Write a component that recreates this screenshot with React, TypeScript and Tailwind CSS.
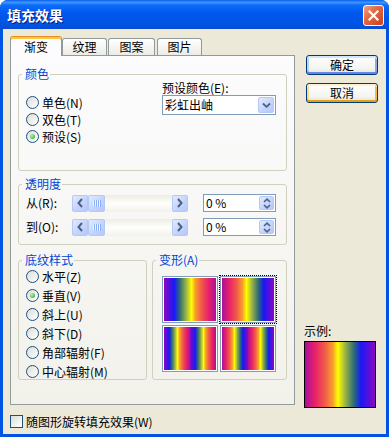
import React from 'react';

// rainbow preset ("彩虹出岫"), four variants of the vertical style
const GRAD_A =
  'bg-[linear-gradient(to_right,#8C08C0_0%,#1818F8_20%,#2C6C74_30%,#98B048_42%,#FFFF00_53%,#F8A02C_60%,#F05A48_72%,#E8206A_86%,#A8109C_100%)]';
const GRAD_B =
  'bg-[linear-gradient(to_right,#A8109C_0%,#E8206A_14%,#F05A48_28%,#F8A02C_40%,#FFFF00_47%,#98B048_58%,#2C6C74_70%,#1818F8_80%,#8C08C0_100%)]';
const GRAD_C =
  'bg-[linear-gradient(to_right,#8C08C0_0%,#1818F8_10%,#2C6C74_15%,#98B048_21%,#FFFF00_26%,#F8A02C_30%,#F05A48_36%,#E8206A_43%,#A8109C_50%,#8C08C0_50%,#1818F8_60%,#2C6C74_65%,#98B048_71%,#FFFF00_76%,#F8A02C_80%,#F05A48_86%,#E8206A_93%,#A8109C_100%)]';
const GRAD_D =
  'bg-[linear-gradient(to_right,#A8109C_0%,#E8206A_7%,#F05A48_14%,#F8A02C_20%,#FFFF00_24%,#98B048_29%,#2C6C74_35%,#1818F8_40%,#8C08C0_50%,#A8109C_50%,#E8206A_57%,#F05A48_64%,#F8A02C_70%,#FFFF00_74%,#98B048_79%,#2C6C74_85%,#1818F8_90%,#8C08C0_100%)]';

function BlueBtn({ className, children }: { className?: string; children?: React.ReactNode }) {
  return (
    <div
      className={`flex items-center justify-center rounded-[2px] border border-[#B5C9F6] bg-[linear-gradient(135deg,#E3EBFE,#C4D4FC_55%,#B4C8F6)] ${className ?? ''}`}
    >
      {children}
    </div>
  );
}

function Radio({ checked = false }: { checked?: boolean }) {
  return (
    <span className="flex h-[13px] w-[13px] shrink-0 items-center justify-center rounded-full border border-[#1C5180] bg-[linear-gradient(135deg,#DCDCD7,#FFFFFF)]">
      {checked && (
        <span className="h-[5px] w-[5px] rounded-full bg-[radial-gradient(circle_at_35%_35%,#B6F3B4,#21A121)]" />
      )}
    </span>
  );
}

function RadioRow({ label, checked }: { label: string; checked?: boolean }) {
  return (
    <div className="flex h-[13px] items-center gap-[3px] leading-[13px]">
      <Radio checked={checked} />
      <span>{label}</span>
    </div>
  );
}

function Group({ title, className, children }: { title: string; className?: string; children: React.ReactNode }) {
  return (
    <fieldset className={`rounded-[3px] border border-[#D0D0BF] ${className ?? ''}`}>
      <legend className="ml-[3px] pl-[3px] pr-[1px] leading-[14px] text-[#0046D5]">{title}</legend>
      {children}
    </fieldset>
  );
}

function HScroll() {
  return (
    <div className="flex h-[17px] w-[116px] bg-[linear-gradient(to_bottom,#EEEDE5,#FEFEFB_50%,#F3F1EC)]">
      <BlueBtn className="h-full w-[16px]">
        <svg width="6" height="10" viewBox="0 0 6 10">
          <polyline points="5,1 1.5,5 5,9" fill="none" stroke="#4D6185" strokeWidth="2" />
        </svg>
      </BlueBtn>
      <BlueBtn className="h-full w-[17px] gap-0">
        {[0, 1, 2, 3].map((i) => (
          <React.Fragment key={i}>
            <span className="h-[7px] w-[1px] bg-[#EEF4FE]" />
            <span className="h-[7px] w-[1px] bg-[#8CB0F8]" />
          </React.Fragment>
        ))}
      </BlueBtn>
      <div className="flex-1" />
      <BlueBtn className="h-full w-[16px]">
        <svg width="6" height="10" viewBox="0 0 6 10">
          <polyline points="1,1 4.5,5 1,9" fill="none" stroke="#4D6185" strokeWidth="2" />
        </svg>
      </BlueBtn>
    </div>
  );
}

function Spin() {
  return (
    <div className="ml-[15px] flex h-[18px] w-[73px] items-center border border-[#7F9DB9] bg-white pl-[2px] pr-[1px]">
      <span className="flex-1 leading-none">0 %</span>
      <BlueBtn className="h-[14px] w-[15px] flex-col gap-[1px]">
        <svg width="8" height="5" viewBox="0 0 8 5">
          <polyline points="1,4 4,1.2 7,4" fill="none" stroke="#4D6185" strokeWidth="1.6" />
        </svg>
        <svg width="8" height="5" viewBox="0 0 8 5">
          <polyline points="1,1 4,3.8 7,1" fill="none" stroke="#4D6185" strokeWidth="1.6" />
        </svg>
      </BlueBtn>
    </div>
  );
}

function TRow({ label }: { label: string }) {
  return (
    <div className="flex h-[18px] items-center">
      <span className="w-[46px] leading-none">{label}</span>
      <HScroll />
      <Spin />
    </div>
  );
}

function Thumb({ grad, selected }: { grad: string; selected?: boolean }) {
  return (
    <div
      className={`border border-[#7F9DB9] bg-white p-[1px] ${selected ? 'outline-1 outline-dotted outline-black' : ''}`}
    >
      <div className={`h-full w-full ${grad}`} />
    </div>
  );
}

export default function App() {
  return (
    <div className="flex h-[437px] w-[389px] flex-col overflow-hidden rounded-t-[8px] bg-[#0054E3] font-['Noto_Sans_CJK_SC',sans-serif] text-[12px] text-black">
      {/* Title bar */}
      <div className="flex h-[29px] shrink-0 items-center justify-between bg-[linear-gradient(to_bottom,#0A5FEF_0%,#3D95FF_8%,#0D6CFA_18%,#0058EE_45%,#0054E3_80%,#0051DC_92%,#0A4ACF_100%)] pl-[7px] pr-[5px]">
        <span className="text-[14px] font-bold leading-none text-white [text-shadow:1px_1px_0_#0A1883]">填充效果</span>
        <div className="mt-[2px] flex h-[21px] w-[21px] items-center justify-center rounded-[3px] border border-white bg-[linear-gradient(135deg,#F0A088,#E26A45_40%,#C9401A)]">
          <svg width="11" height="11" viewBox="0 0 11 11">
            <path d="M1.5 1.5 L9.5 9.5 M9.5 1.5 L1.5 9.5" stroke="white" strokeWidth="2.2" strokeLinecap="square" />
          </svg>
        </div>
      </div>

      {/* Body */}
      <div className="mx-[3px] mb-[3px] flex flex-1 bg-[#ECE9D8] pl-[7px] pt-[7px]">
        <div className="flex w-[285px] flex-col">
          {/* Tabs */}
          <div className="flex h-[19px] items-end">
            <div className="relative z-10 mb-[-1px] flex h-[20px] w-[52px] items-center justify-center rounded-t-[3px] border-x border-t border-x-[#919B9C] border-t-[#E68B2C] bg-[#FCFCFE] leading-none shadow-[inset_0_2px_0_#FFC83C]">
              渐变
            </div>
            <div className="flex h-[17px] w-[45px] items-center justify-center rounded-t-[3px] border-x border-t border-[#919B9C] bg-[linear-gradient(to_bottom,#FFFFFF,#ECEBE6)] leading-none">
              纹理
            </div>
            <div className="ml-[1px] flex h-[17px] w-[47px] items-center justify-center rounded-t-[3px] border-x border-t border-[#919B9C] bg-[linear-gradient(to_bottom,#FFFFFF,#ECEBE6)] leading-none">
              图案
            </div>
            <div className="ml-[2px] flex h-[17px] w-[45px] items-center justify-center rounded-t-[3px] border-x border-t border-[#919B9C] bg-[linear-gradient(to_bottom,#FFFFFF,#ECEBE6)] leading-none">
              图片
            </div>
          </div>

          {/* Tab page */}
          <div className="h-[350px] border border-[#919B9C] bg-[linear-gradient(to_bottom,#FCFCFE,#F2F1EA)] px-[7px] pt-[11px]">
            <Group title="颜色">
              <div className="flex pb-[27px]">
                <div className="flex flex-col gap-[4px] pl-[7px] pt-[15px]">
                  <RadioRow label="单色(N)" />
                  <RadioRow label="双色(T)" />
                  <RadioRow label="预设(S)" checked />
                </div>
                <div className="ml-auto mr-[10px] flex w-[114px] flex-col">
                  <span className="h-[14px] leading-[14px]">预设颜色(E):</span>
                  <div className="flex h-[20px] items-center border border-[#7F9DB9] bg-white pl-[2px] pr-[1px]">
                    <span className="flex-1 leading-none">彩虹出岫</span>
                    <BlueBtn className="h-[16px] w-[16px]">
                      <svg width="9" height="6" viewBox="0 0 9 6">
                        <polyline points="1,1.5 4.5,4.8 8,1.5" fill="none" stroke="#4D6185" strokeWidth="1.8" />
                      </svg>
                    </BlueBtn>
                  </div>
                </div>
              </div>
            </Group>

            <Group title="透明度" className="mt-[6px]">
              <div className="flex flex-col gap-[6px] pb-[8px] pl-[7px] pt-[3px]">
                <TRow label="从(R):" />
                <TRow label="到(O):" />
              </div>
            </Group>

            <div className="mt-[8px] flex gap-[5px]">
              <Group title="底纹样式" className="w-[129px]">
                <div className="flex flex-col gap-[6px] pb-[1px] pl-[7px] pt-[3px]">
                  <RadioRow label="水平(Z)" />
                  <RadioRow label="垂直(V)" checked />
                  <RadioRow label="斜上(U)" />
                  <RadioRow label="斜下(D)" />
                  <RadioRow label="角部辐射(F)" />
                  <RadioRow label="中心辐射(M)" />
                </div>
              </Group>
              <Group title="变形(A)" className="flex-1">
                <div className="grid grid-cols-[56px_56px] grid-rows-[47px_47px] gap-[2px] pl-[9px] pt-[9px]">
                  <Thumb grad={GRAD_A} />
                  <Thumb grad={GRAD_B} selected />
                  <Thumb grad={GRAD_C} />
                  <Thumb grad={GRAD_D} />
                </div>
              </Group>
            </div>
          </div>

          {/* Rotate with shape */}
          <div className="mt-[10px] flex h-[13px] items-center gap-[3px] leading-[13px]">
            <span className="h-[13px] w-[13px] border border-[#1C5180] bg-[linear-gradient(135deg,#DCDCD7,#FFFFFF)]" />
            <span>随图形旋转填充效果(W)</span>
          </div>
        </div>

        {/* Right column */}
        <div className="ml-[9px] flex flex-col pt-[19px]">
          <button className="ml-[2px] flex h-[20px] w-[72px] items-center justify-center rounded-[3px] border border-[#003C74] bg-[linear-gradient(to_bottom,#FFFFFF,#F4F4F0_70%,#E3E0D5)] leading-none shadow-[inset_0_2px_0_#CEE7FF,inset_0_-2px_0_#6982EE,inset_2px_0_0_#BCD4F6,inset_-2px_0_0_#89ADE4]">
            确定
          </button>
          <button className="ml-[2px] mt-[8px] flex h-[20px] w-[72px] items-center justify-center rounded-[3px] border border-[#003C74] bg-[linear-gradient(to_bottom,#FFFFFF,#F4F4F0_70%,#E3E0D5)] leading-none shadow-[inset_0_2px_0_#FFF0CF,inset_0_-2px_0_#E5A01A,inset_2px_0_0_#FBD891,inset_-2px_0_0_#F8B84A]">
            取消
          </button>
          <span className="mt-[221px] h-[14px] leading-[14px]">示例:</span>
          <div className="mt-[3px] h-[67px] w-[72px] border border-black">
            <div className={`h-full w-full ${GRAD_B}`} />
          </div>
        </div>
      </div>
    </div>
  );
}
